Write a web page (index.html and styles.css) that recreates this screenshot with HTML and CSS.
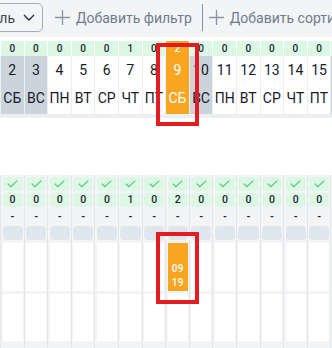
FILE: index.html
```html
<!DOCTYPE html>
<html lang="ru">
<head>
<meta charset="utf-8">
<link rel="stylesheet" href="styles.css">
</head>
<body>
<div class="page">
  <div class="toolbar">
    <div class="select">
      <span class="select-text">Апрель</span>
      <svg class="chev" width="12" height="7" viewBox="0 0 12 7"><polyline points="1,1 6,6 11,1" fill="none" stroke="#1e2a4a" stroke-width="1.3"/></svg>
    </div>
    <span class="add"><svg class="plus" width="15" height="15" viewBox="0 0 15 15"><path d="M7.5 0V15M0 7.5H15" stroke="#8a95a7" stroke-width="1.3"/></svg>Добавить фильтр</span>
    <span class="divider"></span>
    <span class="add add2"><svg class="plus" width="15" height="15" viewBox="0 0 15 15"><path d="M7.5 0V15M0 7.5H15" stroke="#8a95a7" stroke-width="1.3"/></svg>Добавить сортировку</span>
  </div>

  <div class="cal">
    <div class="grid counts">
      <div class="c">0</div><div class="c">0</div><div class="c">0</div><div class="c">0</div><div class="c">0</div><div class="c">1</div><div class="c">0</div><div class="c sel">2</div><div class="c">0</div><div class="c">0</div><div class="c">0</div><div class="c">0</div><div class="c">0</div><div class="c">0</div><div class="c">0</div>
    </div>
    <div class="grid days">
      <div class="d we"><span class="n">2</span><span class="w">СБ</span></div>
      <div class="d we"><span class="n">3</span><span class="w">ВС</span></div>
      <div class="d"><span class="n">4</span><span class="w">ПН</span></div>
      <div class="d"><span class="n">5</span><span class="w">ВТ</span></div>
      <div class="d"><span class="n">6</span><span class="w">СР</span></div>
      <div class="d"><span class="n">7</span><span class="w">ЧТ</span></div>
      <div class="d"><span class="n">8</span><span class="w">ПТ</span></div>
      <div class="d sel"><span class="n">9</span><span class="w">СБ</span></div>
      <div class="d we"><span class="n">10</span><span class="w">ВС</span></div>
      <div class="d"><span class="n">11</span><span class="w">ПН</span></div>
      <div class="d"><span class="n">12</span><span class="w">ВТ</span></div>
      <div class="d"><span class="n">13</span><span class="w">СР</span></div>
      <div class="d"><span class="n">14</span><span class="w">ЧТ</span></div>
      <div class="d"><span class="n">15</span><span class="w">ПТ</span></div>
      <div class="d we"><span class="n">16</span><span class="w">СБ</span></div>
    </div>
    <div class="band"></div>
  </div>

  <div class="spacer"></div>

  <div class="grid board" id="board"></div>

  <div class="mark mark-top"></div>
  <div class="mark mark-bottom"></div>
</div>
<script src="app.js"></script>
</body>
</html>
```

FILE: app.js
```js
var counts = [0,0,0,0,0,1,0,2,0,0,0,0,0,0,0];
var board = document.getElementById('board');
var check = '<svg width="11" height="8" viewBox="0 0 11 8"><polyline points="0.7,3.6 3.9,6.7 10.3,0.7" fill="none" stroke="#56bf86" stroke-width="1.1"/></svg>';
counts.forEach(function (n, i) {
  var col = document.createElement('div');
  col.className = 'bcol';
  var ev = i === 7
    ? '<div class="slot ev"><span>09</span><span>19</span></div>'
    : '<div class="slot"></div>';
  col.innerHTML =
    '<div class="pill chk">' + check + '</div>' +
    '<div class="pill cnt">' + n + '</div>' +
    '<div class="dash">-</div>' +
    '<div class="pill gray"></div>' +
    ev +
    '<div class="slot slot2"></div>';
  board.appendChild(col);
});
```

FILE: styles.css
```css
* { box-sizing: border-box; }
html, body { margin: 0; padding: 0; }
body {
  width: 332px;
  height: 348px;
  overflow: hidden;
  background: #ffffff;
  font-family: Roboto, "Liberation Sans", sans-serif;
}
.page { position: relative; width: 332px; height: 348px; overflow: hidden; }

.toolbar {
  height: 37px;
  background: #f3f4f6;
  display: flex;
  align-items: center;
  white-space: nowrap;
  padding-bottom: 2px;
}
.select {
  flex: none;
  width: 90px;
  height: 29px;
  margin-left: -47px;
  border: 1px solid #a3adba;
  border-radius: 5px;
  display: flex;
  align-items: center;
  justify-content: flex-end;
  gap: 8px;
  padding-right: 7px;
  font-size: 14px;
  color: #3f4756;
}
.chev { display: block; }
.add {
  flex: none;
  display: flex;
  align-items: center;
  gap: 6px;
  margin-left: 12px;
  font-size: 14px;
  color: #6e7c90;
}
.add2 { margin-left: 6px; }
.plus { display: block; }
.divider {
  flex: none;
  width: 1px;
  height: 27px;
  background: #8294aa;
  margin-left: 10px;
}

.cal { padding-top: 4px; }
.grid {
  display: grid;
  grid-template-columns: repeat(15, 22.6px);
  column-gap: 1px;
  padding-left: 1px;
  width: 360px;
}
.counts { background: #ffffff; }
.counts .c {
  height: 15px;
  background: #dcf8e4;
  font-size: 10px;
  font-weight: 500;
  color: #1d2433;
  text-align: center;
  line-height: 15px;
}
.counts .c.sel { background: #f8a621; color: #ffffff; }
.days { background: #eceef1; }
.d {
  height: 58px;
  background: #ffffff;
  display: flex;
  flex-direction: column;
  align-items: center;
  color: #151b2b;
}
.d.we { background: #cbd3db; }
.d.sel { background: #f8a621; color: #ffffff; }
.d .n { font-size: 14px; line-height: 28px; }
.d .w { font-size: 14px; line-height: 28px; }
.band { height: 4px; background: #eceef1; }
.spacer { height: 57px; }

.board { background: #e3e6ea; height: 173px; }
.bcol {
  background: #f3f4f6;
  display: flex;
  flex-direction: column;
  gap: 2px;
  padding: 2px 1px 0 1.5px;
}
.pill { height: 14px; border-radius: 4px; flex: none; }
.chk { background: #dcf8e4; display: flex; align-items: center; justify-content: center; }
.chk svg { display: block; }
.cnt {
  background: #dcf8e4;
  font-size: 10.5px;
  font-weight: 500;
  color: #1d2433;
  text-align: center;
  line-height: 14px;
}
.dash {
  height: 15px;
  font-size: 10px;
  font-weight: 700;
  line-height: 15px;
  text-align: center;
  color: #1d2433;
}
.gray { background: #e0e6ed; }
.slot { height: 48px; background: #ffffff; margin-top: 1px; flex: none; }
.slot2 { height: 47px; }
.ev {
  background: #f8a621;
  color: #ffffff;
  font-size: 10px;
  font-weight: 500;
  display: flex;
  flex-direction: column;
  align-items: center;
  justify-content: flex-end;
  line-height: 14px;
  padding-bottom: 1px;
  letter-spacing: 0.3px;
}

.mark {
  position: absolute;
  border: 4px solid #e21d22;
}
.mark-top { left: 156px; top: 43px; width: 43px; height: 83px; }
.mark-bottom { left: 156px; top: 232px; width: 43px; height: 72px; }
```
